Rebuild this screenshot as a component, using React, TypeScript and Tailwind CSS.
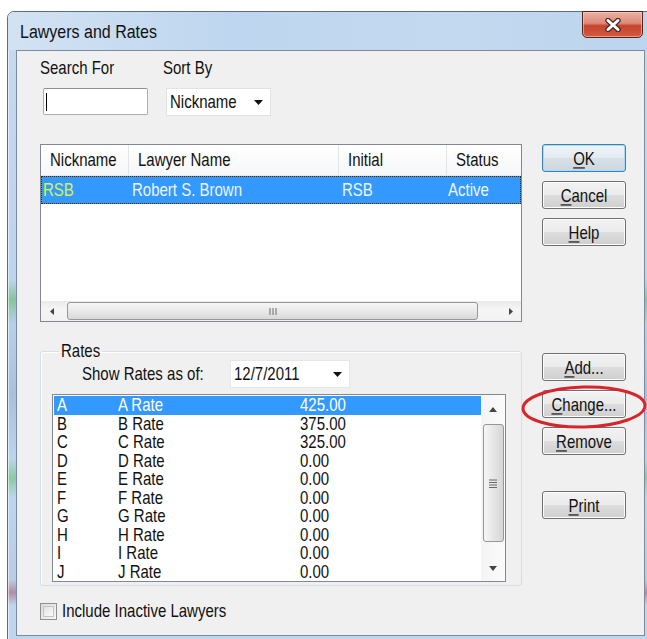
import React from 'react';

type Rate = { code: string; name: string; amount: string };

const rates: Rate[] = [
  { code: 'A', name: 'A Rate', amount: '425.00' },
  { code: 'B', name: 'B Rate', amount: '375.00' },
  { code: 'C', name: 'C Rate', amount: '325.00' },
  { code: 'D', name: 'D Rate', amount: '0.00' },
  { code: 'E', name: 'E Rate', amount: '0.00' },
  { code: 'F', name: 'F Rate', amount: '0.00' },
  { code: 'G', name: 'G Rate', amount: '0.00' },
  { code: 'H', name: 'H Rate', amount: '0.00' },
  { code: 'I', name: 'I Rate', amount: '0.00' },
  { code: 'J', name: 'J Rate', amount: '0.00' },
];

// dialog text is drawn a little taller than it is wide
const T = ({ children }: { children: React.ReactNode }) => (
  <span className="inline-block scale-y-[1.18]">{children}</span>
);

const DownArrow = () => (
  <svg width="9" height="5" viewBox="0 0 9 5">
    <path d="M0 0h9L4.5 5z" fill="#111" />
  </svg>
);

// Windows 7 push button; first letter gets the access-key underline
const Button = ({ label, isDefault = false }: { label: string; isDefault?: boolean }) => (
  <div
    className={
      isDefault
        ? 'flex items-center justify-center w-[84px] h-[28px] rounded-[3px] border border-[#3c7fb1] bg-[linear-gradient(to_bottom,#eef3f7_0%,#e4ebf0_50%,#d7e0e6_51%,#cdd7de_100%)] shadow-[inset_0_0_0_1px_#a6dcf7] leading-none text-[#111]'
        : 'flex items-center justify-center w-[84px] h-[28px] rounded-[3px] border border-[#707070] bg-[linear-gradient(to_bottom,#f2f2f2_0%,#ebebeb_50%,#dddddd_51%,#cfcfcf_100%)] shadow-[inset_0_0_0_1px_#fcfcfc] leading-none text-[#111]'
    }
  >
    <T>
      <span className="underline underline-offset-[2px] decoration-1">{label[0]}</span>
      {label.slice(1)}
    </T>
  </div>
);

const ListView = () => (
  <div className="h-[178px] border border-[#828790] bg-white flex flex-col">
    <div className="h-[31px] flex items-center bg-[linear-gradient(to_bottom,#ffffff,#f6f7f9)] border-b border-[#e5e5e5] whitespace-nowrap overflow-hidden">
      <div className="w-[87px] h-full flex items-center pl-[9px]"><T>Nickname</T></div>
      <div className="w-[210px] h-full flex items-center pl-[9px] border-l border-[#e3e5e8]"><T>Lawyer Name</T></div>
      <div className="w-[108px] h-full flex items-center pl-[9px] border-l border-[#e3e5e8]"><T>Initial</T></div>
      <div className="flex-1 h-full flex items-center pl-[9px] border-l border-[#e3e5e8]"><T>Status</T></div>
    </div>
    <div className="h-[28px] flex items-center bg-[#3399ff] border border-dotted border-[#2a2a2a] text-[#eef5ff] whitespace-nowrap overflow-hidden">
      <div className="w-[87px] pl-[1px] text-[#d6f34c]"><T>RSB</T></div>
      <div className="w-[210px] pl-[3px]"><T>Robert S. Brown</T></div>
      <div className="w-[108px] pl-[3px]"><T>RSB</T></div>
      <div className="flex-1 pl-[1px]"><T>Active</T></div>
    </div>
    <div className="flex-1" />
    <div className="h-[20px] flex items-center bg-[linear-gradient(to_bottom,#e9e9e9,#f5f5f5_40%,#f2f2f2)]">
      <div className="w-[21px] h-full flex items-center justify-center">
        <svg width="4" height="7" viewBox="0 0 4 7">
          <path d="M4 0v7L0 3.5z" fill="#444" />
        </svg>
      </div>
      <div className="flex-1 h-full flex items-center">
        <div className="ml-[5px] w-[411px] h-[18px] rounded-[3px] border border-[#989898] bg-[linear-gradient(to_bottom,#f6f6f6,#e9e9e9_50%,#d9d9d9)] flex items-center justify-center">
          <svg width="8" height="7" viewBox="0 0 8 7">
            <path d="M1 0v7M4 0v7M7 0v7" stroke="#6a6a6a" strokeWidth="1" />
          </svg>
        </div>
      </div>
      <div className="w-[21px] h-full flex items-center justify-center">
        <svg width="4" height="7" viewBox="0 0 4 7">
          <path d="M0 0v7L4 3.5z" fill="#444" />
        </svg>
      </div>
    </div>
  </div>
);

const RatesList = () => (
  <div className="h-[188px] border border-[#828790] bg-white flex">
    <div className="flex-1 pl-[1px] pt-[1px]">
      {rates.map((r, i) => (
        <div
          key={r.code}
          className={
            i === 0
              ? 'flex h-[18.5px] leading-[18.5px] bg-[#3399ff] text-white'
              : 'flex h-[18.5px] leading-[18.5px] text-[#111]'
          }
        >
          <div className="w-[64px] pl-[3px]"><T>{r.code}</T></div>
          <div className="w-[182px]"><T>{r.name}</T></div>
          <div><T>{r.amount}</T></div>
        </div>
      ))}
    </div>
    <div className="w-[24px] flex flex-col items-center bg-[linear-gradient(to_right,#f4f4f4,#fbfbfb)]">
      <div className="h-[28px] flex items-center justify-center">
        <svg width="8" height="5" viewBox="0 0 8 5">
          <path d="M0 5h8L4 0z" fill="#444" />
        </svg>
      </div>
      <div className="mt-[1px] w-[21px] h-[118px] rounded-[3px] border border-[#979797] bg-[linear-gradient(to_right,#f6f6f6,#e6e6e6_50%,#d6d6d6)] flex items-center justify-center">
        <svg width="8" height="9" viewBox="0 0 8 9">
          <path d="M0 1h8M0 3.5h8M0 6h8M0 8.5h8" stroke="#6a6a6a" strokeWidth="1" />
        </svg>
      </div>
      <div className="mt-auto h-[26px] flex items-center justify-center">
        <svg width="8" height="5" viewBox="0 0 8 5">
          <path d="M0 0h8L4 5z" fill="#444" />
        </svg>
      </div>
    </div>
  </div>
);

export default function App() {
  return (
    <div className="relative w-[647px] h-[639px] overflow-hidden bg-white font-['Liberation_Sans',Arial,sans-serif] text-[15px] text-[#111]">
      <div className="ml-[7px] mt-[11px] w-[647px] h-[640px] rounded-t-[7px] border border-[#5e6c7c] shadow-[inset_0_0_0_1px_rgba(255,255,255,0.55)] bg-[linear-gradient(to_bottom,#c6daef_0%,#bed4ec_42%,#86c49e_45%,#b8d1eb_49%,#a9c0d9_60%,#bdd5ec_70%,#8acb9f_73%,#bdd5ec_76%,#b9cde4_89%,#b48aa6_91%,#c0d6ed_93%)] flex flex-col">
        {/* caption */}
        <div className="h-[38px] flex items-start justify-between rounded-t-[6px] bg-[linear-gradient(to_right,#d2e2f3,#bed6ef_35%,#c3d9f0_70%,#bcd4ee)]">
          <span className="pl-[12px] pt-[11px] text-[16px] leading-[18px] text-[#111]"><T>Lawyers and Rates</T></span>
          <div className="-mt-[1px] mr-[10px] w-[61px] h-[27px] rounded-b-[5px] border border-[#5a231a] bg-[linear-gradient(to_bottom,#eab0a3_0%,#dd8a78_45%,#c6432c_55%,#d35a40_100%)] shadow-[inset_0_0_0_1px_rgba(255,210,200,0.55)] flex items-center justify-center">
            <svg width="18" height="14" viewBox="0 0 18 14">
              <path d="M4 2.5 L14 11.5 M14 2.5 L4 11.5" stroke="#4b2a24" strokeWidth="5.5" strokeLinecap="round" />
              <path d="M4 2.5 L14 11.5 M14 2.5 L4 11.5" stroke="#ffffff" strokeWidth="3" strokeLinecap="round" />
            </svg>
          </div>
        </div>

        {/* client area */}
        <div className="ml-[8px] w-[629px] h-[586px] border border-[#7b8a9c] bg-[#f0f0f0] flex flex-col">
          <div className="flex pl-[23px] pt-[8px]">
            <div className="w-[123px]">
              <div className="leading-[18px]"><T>Search For</T></div>
              <div className="mt-[11px] ml-[3px] w-[105px] h-[27px] rounded-[2px] border border-[#abadb3] border-t-[#8e9297] bg-white flex items-center pl-[2px]">
                <div className="w-[1px] h-[18px] bg-black" />
              </div>
            </div>
            <div>
              <div className="leading-[18px]"><T>Sort By</T></div>
              <div className="mt-[11px] ml-[3px] w-[105px] h-[28px] border border-[#e2e2e2] bg-white flex items-center pl-[3px] pr-[7px]">
                <span className="flex-1"><T>Nickname</T></span>
                <DownArrow />
              </div>
            </div>
          </div>

          <div className="flex pl-[23px] gap-[20px] mt-[28px]">
            <div className="w-[482px] flex flex-col">
              <ListView />
              <fieldset className="mt-[20px] border border-[#d5dfe5] rounded-[3px] pl-[11px] pr-[15px] pb-[3px] shadow-[inset_1px_1px_0_#ffffff]">
                <legend className="ml-[7px] px-[2px] leading-[18px]"><T>Rates</T></legend>
                <div className="flex items-center">
                  <span className="ml-[30px] w-[148px]"><T>Show Rates as of:</T></span>
                  <div className="w-[120px] h-[28px] border border-[#e6e6e6] bg-white flex items-center pl-[3px] pr-[7px]">
                    <span className="flex-1"><T>12/7/2011</T></span>
                    <DownArrow />
                  </div>
                </div>
                <div className="mt-[6px]">
                  <RatesList />
                </div>
              </fieldset>
            </div>

            <div className="w-[84px] flex flex-col">
              <div className="flex flex-col gap-[9px]">
                <Button label="OK" isDefault />
                <Button label="Cancel" />
                <Button label="Help" />
              </div>
              <div className="mt-[107px] flex flex-col gap-[9px]">
                <Button label="Add..." />
                <Button label="Change..." />
                <Button label="Remove" />
              </div>
              <div className="mt-[36px]">
                <Button label="Print" />
              </div>
            </div>
          </div>

          <div className="flex items-center pl-[23px] mt-[16px]">
            <div className="w-[17px] h-[17px] border border-[#8f8f8f] bg-[linear-gradient(135deg,#dcdcdc,#f6f6f6)] p-[2px]">
              <div className="w-full h-full border border-[#c4c4c4] bg-[linear-gradient(135deg,#e2e2e2,#fbfbfb)]" />
            </div>
            <span className="ml-[5px] leading-[18px]"><T>Include Inactive Lawyers</T></span>
          </div>
        </div>
      </div>

      {/* hand-drawn ring around the Change button */}
      <svg className="absolute left-[520px] top-[383px]" width="127" height="48" viewBox="0 0 127 48">
        <ellipse cx="64" cy="24" rx="61" ry="20" fill="none" stroke="#d8242a" strokeWidth="3" transform="rotate(-1.5 64 24)" />
      </svg>
    </div>
  );
}
